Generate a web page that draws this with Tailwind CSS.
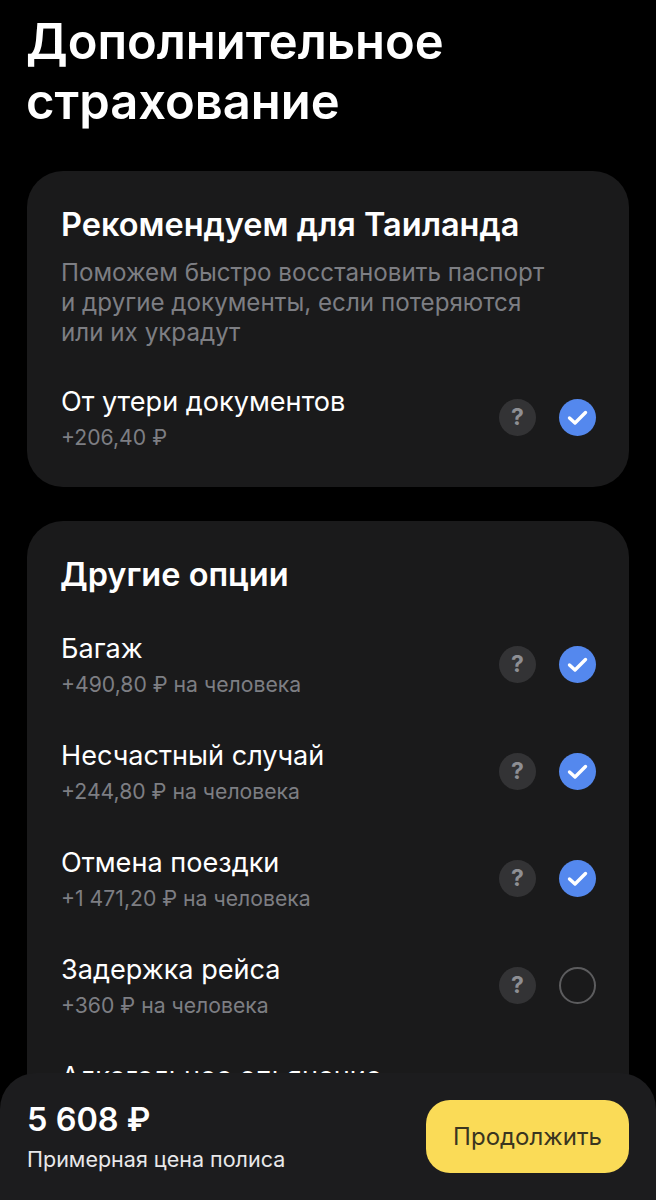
<!DOCTYPE html>
<html lang="ru">
<head>
  <meta charset="UTF-8" />
  <meta name="viewport" content="width=device-width, initial-scale=1.0" />
  <title>Дополнительное страхование</title>
  <script src="https://cdn.jsdelivr.net/npm/@tailwindcss/browser@4"></script>
</head>
<body class="bg-black">
<div class="relative h-[1200px] w-[656px] overflow-hidden bg-black font-['Inter',sans-serif] text-white">

  <div class="px-[27px]">
    <h1 class="-ml-[1px] pt-[12px] text-[48.9px] leading-[60px] font-semibold">Дополнительное<br>страхование</h1>

    <!-- Recommended -->
    <section class="mt-[39px] h-[316px] rounded-[36px] bg-[#1a1a1b] pr-[33px] pl-[34px] pt-[35px]">
      <h2 class="text-[32.5px] leading-[38px] font-semibold">Рекомендуем для Таиланда</h2>
      <p class="mt-[14px] text-[24.2px] leading-[30px] text-[#7d7e83]">Поможем быстро восстановить паспорт<br>и другие документы, если потеряются<br>или их украдут</p>
      <div class="mt-[31px] flex items-center justify-between">
        <div class="pt-[4px] pb-[2px]">
          <div class="text-[27.1px] leading-[38px]">От утери документов</div>
          <div class="text-[21.2px] leading-[32px] text-[#7d7e83]">+206,40 ₽</div>
        </div>
        <div class="flex items-center gap-[23px]">
          <div class="flex h-[37px] w-[37px] items-center justify-center rounded-full bg-[#333335] pt-[1px] text-[23px] font-bold text-[#8e8f94]">?</div>
          <div class="flex h-[37px] w-[37px] items-center justify-center rounded-full bg-[#5488ee]">
            <svg width="23" height="23" viewBox="0 0 23 23" fill="none"><path d="M3.5 12l5.5 5L19.5 6.5" stroke="#fff" stroke-width="3.4" stroke-linecap="round" stroke-linejoin="round"/></svg>
          </div>
        </div>
      </div>
    </section>

    <!-- Other options -->
    <section class="mt-[34px] h-[640px] rounded-[36px] bg-[#1a1a1b] pr-[33px] pl-[34px] pt-[35px]">
      <h2 class="-ml-[1px] text-[32.5px] leading-[38px] font-semibold">Другие опции</h2>
      <div class="mt-[32px] flex flex-col gap-[31px]">
        <div class="flex items-center justify-between">
          <div class="pt-[4px] pb-[2px]">
            <div class="text-[27.1px] leading-[38px]">Багаж</div>
            <div class="text-[21.2px] leading-[32px] text-[#7d7e83]">+490,80 ₽ на человека</div>
          </div>
          <div class="flex items-center gap-[23px]">
            <div class="flex h-[37px] w-[37px] items-center justify-center rounded-full bg-[#333335] pt-[1px] text-[23px] font-bold text-[#8e8f94]">?</div>
            <div class="flex h-[37px] w-[37px] items-center justify-center rounded-full bg-[#5488ee]">
              <svg width="23" height="23" viewBox="0 0 23 23" fill="none"><path d="M3.5 12l5.5 5L19.5 6.5" stroke="#fff" stroke-width="3.4" stroke-linecap="round" stroke-linejoin="round"/></svg>
            </div>
          </div>
        </div>
        <div class="flex items-center justify-between">
          <div class="pt-[4px] pb-[2px]">
            <div class="text-[27.1px] leading-[38px]">Несчастный случай</div>
            <div class="text-[21.2px] leading-[32px] text-[#7d7e83]">+244,80 ₽ на человека</div>
          </div>
          <div class="flex items-center gap-[23px]">
            <div class="flex h-[37px] w-[37px] items-center justify-center rounded-full bg-[#333335] pt-[1px] text-[23px] font-bold text-[#8e8f94]">?</div>
            <div class="flex h-[37px] w-[37px] items-center justify-center rounded-full bg-[#5488ee]">
              <svg width="23" height="23" viewBox="0 0 23 23" fill="none"><path d="M3.5 12l5.5 5L19.5 6.5" stroke="#fff" stroke-width="3.4" stroke-linecap="round" stroke-linejoin="round"/></svg>
            </div>
          </div>
        </div>
        <div class="flex items-center justify-between">
          <div class="pt-[4px] pb-[2px]">
            <div class="text-[27.1px] leading-[38px]">Отмена поездки</div>
            <div class="text-[21.2px] leading-[32px] text-[#7d7e83]">+1 471,20 ₽ на человека</div>
          </div>
          <div class="flex items-center gap-[23px]">
            <div class="flex h-[37px] w-[37px] items-center justify-center rounded-full bg-[#333335] pt-[1px] text-[23px] font-bold text-[#8e8f94]">?</div>
            <div class="flex h-[37px] w-[37px] items-center justify-center rounded-full bg-[#5488ee]">
              <svg width="23" height="23" viewBox="0 0 23 23" fill="none"><path d="M3.5 12l5.5 5L19.5 6.5" stroke="#fff" stroke-width="3.4" stroke-linecap="round" stroke-linejoin="round"/></svg>
            </div>
          </div>
        </div>
        <div class="flex items-center justify-between">
          <div class="pt-[4px] pb-[2px]">
            <div class="text-[27.1px] leading-[38px]">Задержка рейса</div>
            <div class="text-[21.2px] leading-[32px] text-[#7d7e83]">+360 ₽ на человека</div>
          </div>
          <div class="flex items-center gap-[23px]">
            <div class="flex h-[37px] w-[37px] items-center justify-center rounded-full bg-[#333335] pt-[1px] text-[23px] font-bold text-[#8e8f94]">?</div>
            <div class="h-[37px] w-[37px] rounded-full border-2 border-[#5c5c5e]"></div>
          </div>
        </div>
        <div class="pt-[4px]">
          <div class="text-[27.1px] leading-[38px]">Алкогольное опьянение</div>
        </div>
      </div>
    </section>
  </div>

  <!-- Bottom bar -->
  <div class="absolute inset-x-0 bottom-0 flex h-[127px] items-start justify-between rounded-t-[36px] bg-[#1c1c1e] px-[27px] pt-[27px]">
    <div>
      <div class="text-[32.5px] leading-[40px] font-semibold">5 608 ₽</div>
      <div class="mt-[5px] text-[21.5px] leading-[28px] text-[#e8e8ea]">Примерная цена полиса</div>
    </div>
    <button class="h-[73px] w-[203px] rounded-[24px] bg-[#fadb57] text-[24px] text-[#3a3520]">Продолжить</button>
  </div>
</div>
</body>
</html>
